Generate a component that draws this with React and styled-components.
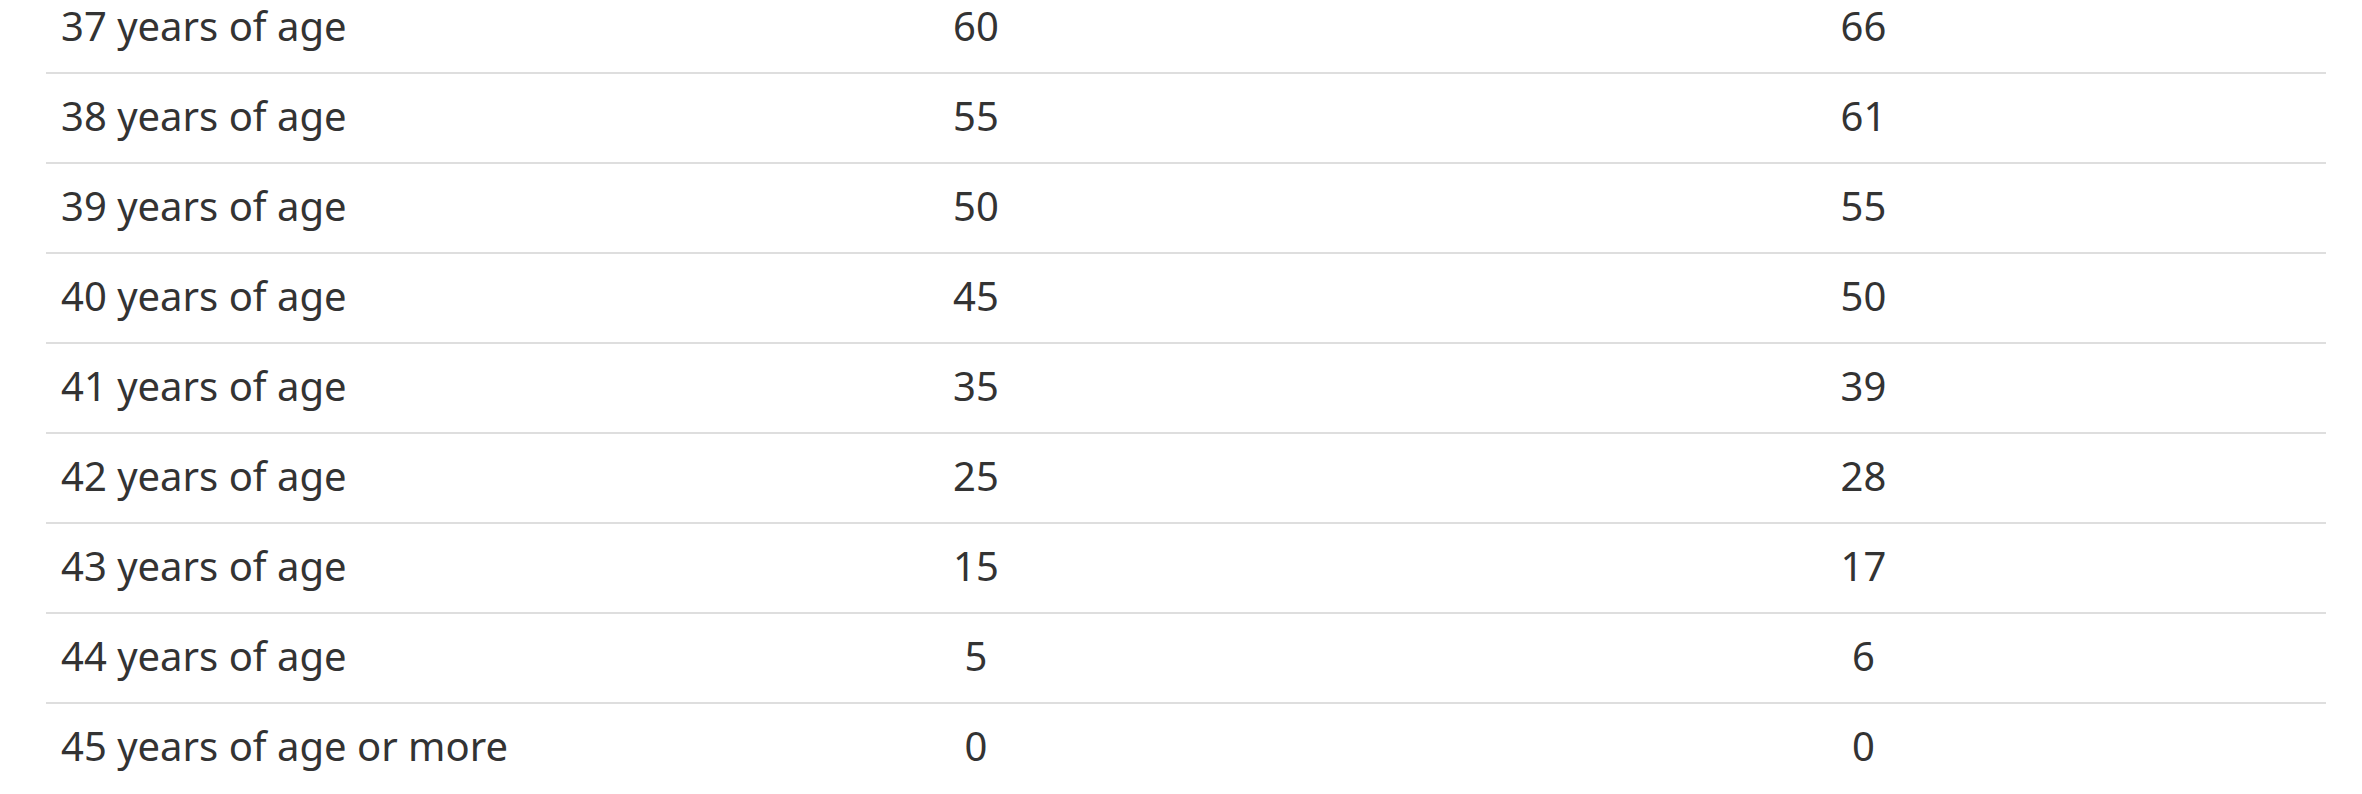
import React from "react";
import styled, { createGlobalStyle } from "styled-components";

const Global = createGlobalStyle`
  html, body { margin: 0; padding: 0; background: #ffffff; }
  body { font-family: "Noto Sans", "Open Sans", sans-serif; color: #333333; overflow: hidden; }
`;

const Table = styled.div`
  margin: -16px 36px 0 46px;
  display: grid;
  grid-template-columns: 505px 850px 1fr;
`;

const Row = styled.div`
  display: contents;
`;

const Cell = styled.div`
  height: 88px;
  box-sizing: border-box;
  display: flex;
  align-items: center;
  justify-content: ${(p) => (p.$center ? "center" : "flex-start")};
  padding: 0 15px 5px;
  font-size: 40px;
  color: #333333;
  border-bottom: ${(p) => (p.$last ? "none" : "2px solid #dedede")};
  height: ${(p) => (p.$last ? "88px" : "90px")};
`;

const rows = [
  ["37 years of age", "60", "66"],
  ["38 years of age", "55", "61"],
  ["39 years of age", "50", "55"],
  ["40 years of age", "45", "50"],
  ["41 years of age", "35", "39"],
  ["42 years of age", "25", "28"],
  ["43 years of age", "15", "17"],
  ["44 years of age", "5", "6"],
  ["45 years of age or more", "0", "0"],
];

export default function App() {
  return (
    <>
      <Global />
      <Table>
        {rows.map(([label, a, b], i) => {
          const last = i === rows.length - 1;
          return (
            <Row key={label}>
              <Cell $last={last}>{label}</Cell>
              <Cell $center $last={last}>{a}</Cell>
              <Cell $center $last={last}>{b}</Cell>
            </Row>
          );
        })}
      </Table>
    </>
  );
}
